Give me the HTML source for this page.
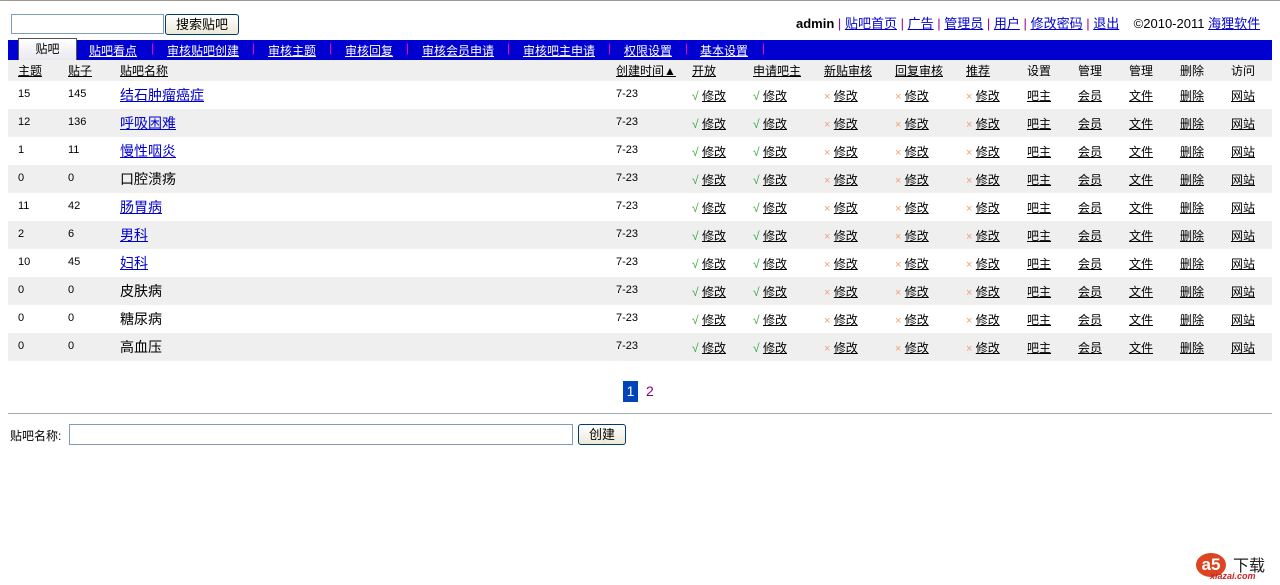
<!DOCTYPE html>
<html><head><meta charset="utf-8"><style>
*{margin:0;padding:0;box-sizing:border-box}
body{width:1280px;height:585px;background:#fff;font-family:"Liberation Sans","Noto Sans CJK SC",sans-serif;font-size:12px;color:#000;position:relative;overflow:hidden;border-top:1px solid #a09890}
.abs{position:absolute;white-space:nowrap}
a{color:#000;text-decoration:underline}
i{font-style:normal}
.top a{color:#00c}
.inp{position:absolute;border:1px solid #7f9db9;background:#fff}
.btn{position:absolute;border:1px solid #003c74;border-radius:3px;background:linear-gradient(#fff,#ece9d8);font-size:13px;text-align:center;line-height:20px}
.nav{position:absolute;left:8px;top:39px;width:1264px;height:20px;background:#0000d0}
.nav a{color:#fff;position:absolute;top:2px;font-size:12px}
.nav b{position:absolute;top:1px;color:#f0a;font-weight:normal;font-size:12px}
.tab{position:absolute;left:10px;top:-2px;width:59px;height:22px;background:linear-gradient(#fff,#e8e8f0);border:1px solid #555;border-bottom:none;text-align:center;line-height:20px;font-size:12px}
.hd{position:absolute;left:8px;top:59px;width:1264px;height:21px;background:#efefef}
.hd span{position:absolute;top:2px;font-size:12px}
.r{position:absolute;left:8px;width:1264px;height:28px}
.g{background:#efeff0}
.r>span,.r>a{position:absolute;top:6px;font-size:12px;white-space:nowrap}
.r>.nm{font-size:14px;top:4px;color:#00c}
.r>.nb{font-size:14px;top:4px}
.r>.sm{font-size:11px;top:7px}
.ok{color:#3a3;font-size:12px}
.x{color:#f0a070;font-size:11px}
</style></head><body>
<div class="inp" style="left:11px;top:13px;width:153px;height:20px"></div>
<div class="btn" style="left:165px;top:13px;width:74px;height:21px">搜索贴吧</div>
<div class="abs top" style="left:796px;top:12px;font-size:13px"><b style="font-weight:bold">admin</b> <span style="color:#909">|</span> <a>贴吧首页</a> <span style="color:#909">|</span> <a>广告</a> <span style="color:#909">|</span> <a>管理员</a> <span style="color:#909">|</span> <a>用户</a> <span style="color:#909">|</span> <a>修改密码</a> <span style="color:#909">|</span> <a>退出</a> &nbsp; &nbsp;©2010-2011 <a>海狸软件</a></div>
<div class="nav">
<div class="tab">贴吧</div>
<a style="left:81px">贴吧看点</a><b style="left:143px">|</b>
<a style="left:159px">审核贴吧创建</a><b style="left:244px">|</b>
<a style="left:260px">审核主题</a><b style="left:321px">|</b>
<a style="left:337px">审核回复</a><b style="left:398px">|</b>
<a style="left:414px">审核会员申请</a><b style="left:499px">|</b>
<a style="left:515px">审核吧主申请</a><b style="left:600px">|</b>
<a style="left:616px">权限设置</a><b style="left:677px">|</b>
<a style="left:692px">基本设置</a><b style="left:754px">|</b>
</div>
<div class="hd">
<span style="left:10px"><a>主题</a></span><span style="left:60px"><a>贴子</a></span><span style="left:112px"><a>贴吧名称</a></span>
<span style="left:608px"><a>创建时间▲</a></span><span style="left:684px"><a>开放</a></span><span style="left:745px"><a>申请吧主</a></span><span style="left:816px"><a>新贴审核</a></span><span style="left:887px"><a>回复审核</a></span><span style="left:958px"><a>推荐</a></span><span style="left:1019px">设置</span><span style="left:1070px">管理</span><span style="left:1121px">管理</span><span style="left:1172px">删除</span><span style="left:1223px">访问</span>
</div>

<div class="r" style="top:80px"><span class="sm" style="left:10px">15</span><span class="sm" style="left:60px">145</span><a class="nm" style="left:112px">结石肿瘤癌症</a><span class="sm" style="left:608px">7-23</span><span style="left:684px"><i class="ok">√</i> <a>修改</a></span><span style="left:745px"><i class="ok">√</i> <a>修改</a></span><span style="left:816px"><i class="x">×</i> <a>修改</a></span><span style="left:887px"><i class="x">×</i> <a>修改</a></span><span style="left:958px"><i class="x">×</i> <a>修改</a></span><a style="left:1019px">吧主</a><a style="left:1070px">会员</a><a style="left:1121px">文件</a><a style="left:1172px">删除</a><a style="left:1223px">网站</a></div>
<div class="r g" style="top:108px"><span class="sm" style="left:10px">12</span><span class="sm" style="left:60px">136</span><a class="nm" style="left:112px">呼吸困难</a><span class="sm" style="left:608px">7-23</span><span style="left:684px"><i class="ok">√</i> <a>修改</a></span><span style="left:745px"><i class="ok">√</i> <a>修改</a></span><span style="left:816px"><i class="x">×</i> <a>修改</a></span><span style="left:887px"><i class="x">×</i> <a>修改</a></span><span style="left:958px"><i class="x">×</i> <a>修改</a></span><a style="left:1019px">吧主</a><a style="left:1070px">会员</a><a style="left:1121px">文件</a><a style="left:1172px">删除</a><a style="left:1223px">网站</a></div>
<div class="r" style="top:136px"><span class="sm" style="left:10px">1</span><span class="sm" style="left:60px">11</span><a class="nm" style="left:112px">慢性咽炎</a><span class="sm" style="left:608px">7-23</span><span style="left:684px"><i class="ok">√</i> <a>修改</a></span><span style="left:745px"><i class="ok">√</i> <a>修改</a></span><span style="left:816px"><i class="x">×</i> <a>修改</a></span><span style="left:887px"><i class="x">×</i> <a>修改</a></span><span style="left:958px"><i class="x">×</i> <a>修改</a></span><a style="left:1019px">吧主</a><a style="left:1070px">会员</a><a style="left:1121px">文件</a><a style="left:1172px">删除</a><a style="left:1223px">网站</a></div>
<div class="r g" style="top:164px"><span class="sm" style="left:10px">0</span><span class="sm" style="left:60px">0</span><span class="nb" style="left:112px">口腔溃疡</span><span class="sm" style="left:608px">7-23</span><span style="left:684px"><i class="ok">√</i> <a>修改</a></span><span style="left:745px"><i class="ok">√</i> <a>修改</a></span><span style="left:816px"><i class="x">×</i> <a>修改</a></span><span style="left:887px"><i class="x">×</i> <a>修改</a></span><span style="left:958px"><i class="x">×</i> <a>修改</a></span><a style="left:1019px">吧主</a><a style="left:1070px">会员</a><a style="left:1121px">文件</a><a style="left:1172px">删除</a><a style="left:1223px">网站</a></div>
<div class="r" style="top:192px"><span class="sm" style="left:10px">11</span><span class="sm" style="left:60px">42</span><a class="nm" style="left:112px">肠胃病</a><span class="sm" style="left:608px">7-23</span><span style="left:684px"><i class="ok">√</i> <a>修改</a></span><span style="left:745px"><i class="ok">√</i> <a>修改</a></span><span style="left:816px"><i class="x">×</i> <a>修改</a></span><span style="left:887px"><i class="x">×</i> <a>修改</a></span><span style="left:958px"><i class="x">×</i> <a>修改</a></span><a style="left:1019px">吧主</a><a style="left:1070px">会员</a><a style="left:1121px">文件</a><a style="left:1172px">删除</a><a style="left:1223px">网站</a></div>
<div class="r g" style="top:220px"><span class="sm" style="left:10px">2</span><span class="sm" style="left:60px">6</span><a class="nm" style="left:112px">男科</a><span class="sm" style="left:608px">7-23</span><span style="left:684px"><i class="ok">√</i> <a>修改</a></span><span style="left:745px"><i class="ok">√</i> <a>修改</a></span><span style="left:816px"><i class="x">×</i> <a>修改</a></span><span style="left:887px"><i class="x">×</i> <a>修改</a></span><span style="left:958px"><i class="x">×</i> <a>修改</a></span><a style="left:1019px">吧主</a><a style="left:1070px">会员</a><a style="left:1121px">文件</a><a style="left:1172px">删除</a><a style="left:1223px">网站</a></div>
<div class="r" style="top:248px"><span class="sm" style="left:10px">10</span><span class="sm" style="left:60px">45</span><a class="nm" style="left:112px">妇科</a><span class="sm" style="left:608px">7-23</span><span style="left:684px"><i class="ok">√</i> <a>修改</a></span><span style="left:745px"><i class="ok">√</i> <a>修改</a></span><span style="left:816px"><i class="x">×</i> <a>修改</a></span><span style="left:887px"><i class="x">×</i> <a>修改</a></span><span style="left:958px"><i class="x">×</i> <a>修改</a></span><a style="left:1019px">吧主</a><a style="left:1070px">会员</a><a style="left:1121px">文件</a><a style="left:1172px">删除</a><a style="left:1223px">网站</a></div>
<div class="r g" style="top:276px"><span class="sm" style="left:10px">0</span><span class="sm" style="left:60px">0</span><span class="nb" style="left:112px">皮肤病</span><span class="sm" style="left:608px">7-23</span><span style="left:684px"><i class="ok">√</i> <a>修改</a></span><span style="left:745px"><i class="ok">√</i> <a>修改</a></span><span style="left:816px"><i class="x">×</i> <a>修改</a></span><span style="left:887px"><i class="x">×</i> <a>修改</a></span><span style="left:958px"><i class="x">×</i> <a>修改</a></span><a style="left:1019px">吧主</a><a style="left:1070px">会员</a><a style="left:1121px">文件</a><a style="left:1172px">删除</a><a style="left:1223px">网站</a></div>
<div class="r" style="top:304px"><span class="sm" style="left:10px">0</span><span class="sm" style="left:60px">0</span><span class="nb" style="left:112px">糖尿病</span><span class="sm" style="left:608px">7-23</span><span style="left:684px"><i class="ok">√</i> <a>修改</a></span><span style="left:745px"><i class="ok">√</i> <a>修改</a></span><span style="left:816px"><i class="x">×</i> <a>修改</a></span><span style="left:887px"><i class="x">×</i> <a>修改</a></span><span style="left:958px"><i class="x">×</i> <a>修改</a></span><a style="left:1019px">吧主</a><a style="left:1070px">会员</a><a style="left:1121px">文件</a><a style="left:1172px">删除</a><a style="left:1223px">网站</a></div>
<div class="r g" style="top:332px"><span class="sm" style="left:10px">0</span><span class="sm" style="left:60px">0</span><span class="nb" style="left:112px">高血压</span><span class="sm" style="left:608px">7-23</span><span style="left:684px"><i class="ok">√</i> <a>修改</a></span><span style="left:745px"><i class="ok">√</i> <a>修改</a></span><span style="left:816px"><i class="x">×</i> <a>修改</a></span><span style="left:887px"><i class="x">×</i> <a>修改</a></span><span style="left:958px"><i class="x">×</i> <a>修改</a></span><a style="left:1019px">吧主</a><a style="left:1070px">会员</a><a style="left:1121px">文件</a><a style="left:1172px">删除</a><a style="left:1223px">网站</a></div>

<div class="abs" style="left:623px;top:380px;width:15px;height:21px;background:#0044bb;color:#fff;font-size:14px;text-align:center;line-height:21px">1</div>
<div class="abs" style="left:646px;top:382px;color:#808;font-size:14px">2</div>
<div class="abs" style="left:8px;top:412px;width:1264px;height:1px;background:#a0a8b0"></div>
<div class="abs" style="left:10px;top:426px;font-size:12px">贴吧名称:</div>
<div class="inp" style="left:69px;top:423px;width:504px;height:21px"></div>
<div class="btn" style="left:578px;top:423px;width:48px;height:21px">创建</div>

<div class="abs" style="left:1196px;top:552px;width:30px;height:24px;border-radius:50%;background:#d42;color:#fff;font-weight:bold;font-size:17px;text-align:center;line-height:23px">a5</div>
<div class="abs" style="left:1233px;top:551px;font-size:16px;color:#222">下载</div>
<div class="abs" style="left:1210px;top:570px;font-size:9px;color:#c22;font-style:italic;font-weight:bold">xiazai.com</div>
</body></html>
